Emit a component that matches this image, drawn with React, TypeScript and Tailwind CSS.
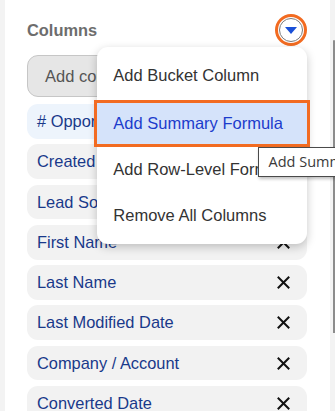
import React from "react";

const pills = [
  { label: "# Opportunities", blue: true },
  { label: "Created Date" },
  { label: "Lead Source" },
  { label: "First Name" },
  { label: "Last Name" },
  { label: "Last Modified Date" },
  { label: "Company / Account" },
  { label: "Converted Date" },
];

function XIcon() {
  return (
    <svg width="13" height="13" viewBox="0 0 13 13" className="shrink-0">
      <path d="M1.5 1.5 L11.5 11.5 M11.5 1.5 L1.5 11.5" stroke="#111" strokeWidth="2" strokeLinecap="square" fill="none" />
    </svg>
  );
}

export default function App() {
  return (
    <div
      className="relative flex w-[335px] h-[411px] overflow-hidden bg-[#f3f3f3]"
      style={{ fontFamily: '"Liberation Sans", Arial, sans-serif' }}
    >
      <div className="w-[5px] shrink-0" />
      <div className="w-[325px] shrink-0 bg-white pl-[22px] pr-[23px] pt-[14px]">
        <div className="flex h-[32px] items-center justify-between">
          <span className="text-[16.4px] font-bold text-[#6d6d6d]">Columns</span>
          <div className="h-[32px] w-[32px] rounded-full border-[3px] border-[#f26b21] bg-white p-[1px]">
            <div className="flex h-full w-full items-center justify-center rounded-full border border-[#7a7a7a]">
              <svg width="12" height="7" viewBox="0 0 12 7">
                <path d="M0 0 H12 L6 7 Z" fill="#1a50d8" />
              </svg>
            </div>
          </div>
        </div>
        <div className="mt-[9px] flex h-[42px] items-center rounded-[11px] border border-[#c6c6c6] bg-[#e6e6e6] pl-[17px] text-[16.5px] text-[#555]">
          Add column...
        </div>
        <div className="mt-[7px] flex flex-col gap-[5.6px]">
          {pills.map((p) => (
            <div
              key={p.label}
              className={`flex h-[34.7px] shrink-0 items-center justify-between rounded-[11px] pl-[10px] pr-[17px] text-[16.4px] text-[#19398a] ${
                p.blue ? "bg-[#edf4fc]" : "bg-[#f2f2f2]"
              }`}
            >
              <span>{p.label}</span>
              {!p.blue && <XIcon />}
            </div>
          ))}
        </div>
      </div>
      <div className="w-[5px] shrink-0">
        <div className="ml-[3px] mt-[40px] h-[293px] w-[2px] rounded-t-[2px] bg-[#8c8c8c]" />
      </div>

      {/* Dropdown menu */}
      <div className="absolute left-[97.3px] top-[46.7px] flex w-[209.4px] flex-col rounded-[11px] bg-white pb-[6.3px] pt-[4.8px] text-[16.5px] text-[#333] shadow-[0_3px_10px_rgba(0,0,0,0.22)]">
        <div className="flex h-[48.5px] items-center pl-[16px]">Add Bucket Column</div>
        <div className="mx-[-3px] flex h-[46.7px] items-center border-[3px] border-[#f26b21] bg-[#d5e3fa] pl-[16px] text-[#1c3ccc]">
          Add Summary Formula
        </div>
        <div className="flex h-[45.3px] items-center whitespace-nowrap pl-[16px]">Add Row-Level Formula</div>
        <div className="flex h-[46px] items-center pl-[16px]">Remove All Columns</div>
      </div>

      {/* Tooltip */}
      <div
        className="absolute left-[257.5px] top-[146.5px] flex h-[30px] w-[140px] items-center whitespace-nowrap border border-[#4a4a4a] bg-white pl-[10px] text-[14.5px] text-[#3a3a3a] shadow-[1px_2px_3px_rgba(0,0,0,0.25)]"
        style={{ fontFamily: '"Open Sans", "Noto Sans", sans-serif' }}
      >
        Add Summary Formula
      </div>
    </div>
  );
}
